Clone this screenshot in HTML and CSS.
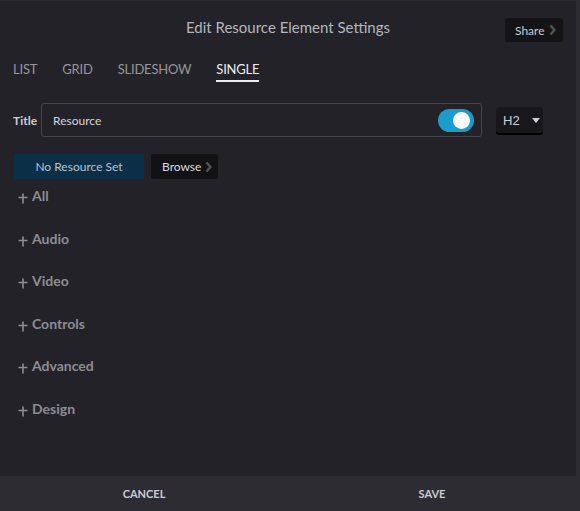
FILE: index.html
```html
<!DOCTYPE html>
<html>
<head>
<meta charset="utf-8">
<link rel="stylesheet" href="styles.css">
</head>
<body>
<div class="panel">
  <div class="content">
    <header class="header">
      <h1 class="heading">Edit Resource Element Settings</h1>
      <button class="share">Share<svg class="chev" width="7" height="12" viewBox="0 0 7 12"><polyline points="1.5,1.5 5.5,6 1.5,10.5" fill="none" stroke="#545358" stroke-width="2.4"/></svg></button>
    </header>
    <nav class="tabs">
      <span class="tab">LIST</span>
      <span class="tab">GRID</span>
      <span class="tab">SLIDESHOW</span>
      <span class="tab active">SINGLE</span>
    </nav>
    <div class="title-row">
      <label class="title-label">Title</label>
      <div class="title-input">
        <span class="title-value">Resource</span>
        <span class="toggle"><span class="knob"></span></span>
      </div>
      <div class="select">H2 <span class="caret"></span></div>
    </div>
    <div class="resource-row">
      <span class="no-resource">No Resource Set</span>
      <button class="browse">Browse<svg class="chev" width="7" height="12" viewBox="0 0 7 12"><polyline points="1.5,1.5 5.5,6 1.5,10.5" fill="none" stroke="#545358" stroke-width="2.4"/></svg></button>
    </div>
    <ul class="sections">
      <li class="section"><svg class="plus" width="10" height="11" viewBox="0 0 10 11"><path d="M0.5 4.5H9.5M5 0.5V10.5" stroke="#8d8d93" stroke-width="1.6"/></svg>All</li>
      <li class="section"><svg class="plus" width="10" height="11" viewBox="0 0 10 11"><path d="M0.5 4.5H9.5M5 0.5V10.5" stroke="#8d8d93" stroke-width="1.6"/></svg>Audio</li>
      <li class="section"><svg class="plus" width="10" height="11" viewBox="0 0 10 11"><path d="M0.5 4.5H9.5M5 0.5V10.5" stroke="#8d8d93" stroke-width="1.6"/></svg>Video</li>
      <li class="section"><svg class="plus" width="10" height="11" viewBox="0 0 10 11"><path d="M0.5 4.5H9.5M5 0.5V10.5" stroke="#8d8d93" stroke-width="1.6"/></svg>Controls</li>
      <li class="section"><svg class="plus" width="10" height="11" viewBox="0 0 10 11"><path d="M0.5 4.5H9.5M5 0.5V10.5" stroke="#8d8d93" stroke-width="1.6"/></svg>Advanced</li>
      <li class="section"><svg class="plus" width="10" height="11" viewBox="0 0 10 11"><path d="M0.5 4.5H9.5M5 0.5V10.5" stroke="#8d8d93" stroke-width="1.6"/></svg>Design</li>
    </ul>
  </div>
  <footer class="footer">
    <button class="foot-btn">CANCEL</button>
    <button class="foot-btn">SAVE</button>
  </footer>
</div>
</body>
</html>
```
FILE: styles.css
```css
* { box-sizing: border-box; }
html, body { margin: 0; padding: 0; }
body {
  background: #2d2c32;
  font-family: Lato, "Open Sans", sans-serif;
  width: 580px;
  height: 511px;
  overflow: hidden;
  padding-top: 1px;
}
.panel {
  width: 576px;
  height: 510px;
  display: flex;
  flex-direction: column;
}
.content {
  background: #232228;
  height: 475px;
  padding: 0 13px;
}
.header {
  display: flex;
  justify-content: center;
  align-items: center;
  position: relative;
  height: 55px;
  padding-bottom: 4px;
}
.heading {
  margin: 0;
  font-size: 15px;
  font-weight: 400;
  color: #b3b7bf;
}
.share {
  position: absolute;
  right: 0;
  top: 17px;
  height: 24px;
  width: 58px;
  background: #141316;
  border: none;
  border-radius: 3px;
  color: #c9cdd4;
  font-family: inherit;
  font-size: 12px;
  padding: 0 0 0 10px;
  display: flex;
  align-items: center;
  gap: 4px;
}
.chev { display: block; }
.tabs {
  display: flex;
  gap: 25px;
  height: 28px;
  align-items: flex-start;
  padding-top: 6px;
}
.tab {
  font-size: 13px;
  color: #97979c;
  letter-spacing: -0.2px;
  padding-bottom: 3px;
  line-height: 15px;
}
.tab.active {
  color: #ededf0;
  border-bottom: 2px solid #ededf0;
}
.title-row {
  display: flex;
  align-items: center;
  margin-top: 19px;
  height: 34px;
}
.title-label {
  font-size: 12px;
  font-weight: 700;
  color: #c9cdd4;
  width: 28px;
}
.title-input {
  width: 441px;
  height: 34px;
  border: 1px solid #47464c;
  border-radius: 3px;
  display: flex;
  align-items: center;
  justify-content: space-between;
  padding: 0 7px 0 11px;
}
.title-value {
  font-size: 12px;
  color: #d4d6db;
}
.toggle {
  width: 36px;
  height: 23px;
  border-radius: 12px;
  background: #1a9dcd;
  position: relative;
}
.knob {
  position: absolute;
  right: 4px;
  top: 3px;
  width: 17px;
  height: 17px;
  border-radius: 50%;
  background: #fff;
}
.select {
  margin-left: 14px;
  width: 47px;
  height: 26px;
  background: #18171b;
  border-radius: 3px;
  box-shadow: 0 2px 0 #000;
  color: #cfd0d4;
  font-family: "Liberation Sans", Arial, sans-serif;
  font-size: 13px;
  display: flex;
  align-items: center;
  padding-left: 7px;
  gap: 12px;
}
.caret {
  width: 0;
  height: 0;
  border-left: 4px solid transparent;
  border-right: 4px solid transparent;
  border-top: 5px solid #cfd0d4;
}
.resource-row {
  display: flex;
  gap: 7px;
  margin-top: 17px;
  height: 25px;
  padding-left: 1px;
}
.no-resource {
  width: 130px;
  height: 25px;
  background: #0b2f46;
  color: #b8c4cc;
  font-size: 12px;
  display: flex;
  align-items: center;
  justify-content: center;
}
.browse {
  width: 67px;
  height: 25px;
  background: #121114;
  border: none;
  border-radius: 3px;
  color: #d8dce2;
  font-family: inherit;
  font-size: 12px;
  padding: 0 0 0 11px;
  display: flex;
  align-items: center;
  gap: 4px;
}
.sections {
  list-style: none;
  margin: 5px 0 0;
  padding: 0 0 0 5px;
}
.section {
  height: 42.6px;
  font-size: 14px;
  font-weight: 700;
  color: #8d8d93;
  display: flex;
  align-items: flex-start;
  padding-top: 3px;
}
.plus {
  display: block;
  margin: 6px 4px 0 0;
}
.footer {
  display: flex;
  height: 35px;
  background: #2d2c32;
}
.foot-btn {
  flex: 1;
  background: none;
  border: none;
  color: #c9cdd4;
  font-family: inherit;
  font-size: 11px;
  font-weight: 700;
}
```
